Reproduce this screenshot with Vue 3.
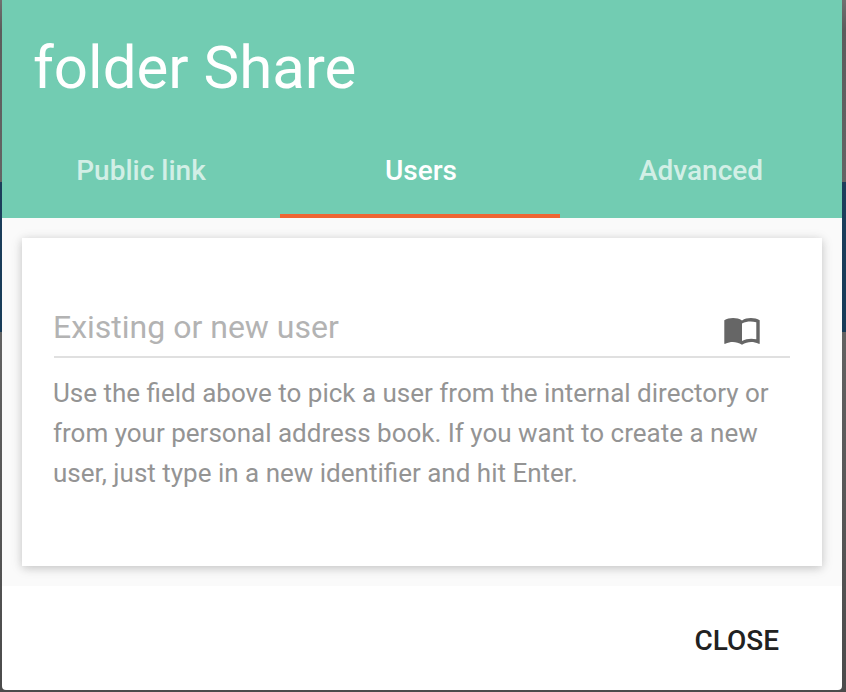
<script setup>
import { ref } from 'vue'

const tabs = ['Public link', 'Users', 'Advanced']
const active = ref('Users')
const user = ref('')
</script>

<template>
  <div class="backdrop">
    <section class="dialog">
      <header class="header">
        <h1 class="title">folder Share</h1>
        <nav class="tabs">
          <button
            v-for="tab in tabs"
            :key="tab"
            class="tab"
            :class="{ active: tab === active }"
            @click="active = tab"
          >{{ tab }}</button>
        </nav>
      </header>
      <main class="body">
        <div class="card">
          <div class="field">
            <input v-model="user" class="input" type="text" placeholder="Existing or new user" />
            <svg class="book" viewBox="0 0 36 27" width="36" height="27">
              <path
                fill="#666"
                fill-rule="evenodd"
                d="M0.300 2.200C5-.5 13-.8 18 2.400C23-.8 31-.5 35.700 2.200V25.200Q35.700 26.200 34.700 25.800C29 23.300 23.500 23.500 18 26.800C12.500 23.500 7 23.300 1.300 25.800Q.3 26.200 .3 25.200ZM18 5.400V23C22.500 20.600 27.500 20.100 32.300 21.300V4.300C27.500 3 22.500 3.300 18 5.400Z"
              />
            </svg>
          </div>
          <p class="help">
            Use the field above to pick a user from the internal directory or<br />
            from your personal address book. If you want to create a new<br />
            user, just type in a new identifier and hit Enter.
          </p>
        </div>
      </main>
      <footer class="footer">
        <button class="close">CLOSE</button>
      </footer>
    </section>
  </div>
</template>

<style>
body {
  margin: 0;
  overflow: hidden;
}
</style>

<style scoped>
.backdrop {
  box-sizing: border-box;
  height: 692px;
  padding: 0 4px 2px 2px;
  background: linear-gradient(#707070 0, #5c5c5c 30px, #646464 182px, #1c3e5b 182px, #173b58 332px, #626262 332px, #4b4b4b 692px);
  font-family: Roboto, "Liberation Sans", sans-serif;
}
.dialog {
  display: flex;
  flex-direction: column;
  height: 690px;
  overflow: hidden;
  border-radius: 0 0 4px 4px;
  background: #fff;
}
.header {
  display: flex;
  flex-direction: column;
  justify-content: space-between;
  height: 218px;
  background: #72ccb2;
}
.title {
  margin: 0;
  padding: 33px 31px 0;
  color: #fff;
  font-size: 60px;
  font-weight: 400;
  line-height: 70px;
}
.tabs {
  display: grid;
  grid-template-columns: repeat(3, 280px);
  height: 96px;
  margin-left: -2px;
}
.tab {
  box-sizing: border-box;
  padding: 4px 0 0 2px;
  border: 0;
  border-bottom: 4px solid transparent;
  background: none;
  color: rgba(255, 255, 255, 0.7);
  font: 500 28px Roboto, "Liberation Sans", sans-serif;
}
.tab.active {
  border-bottom-color: #ee6434;
  color: #fff;
}
.body {
  box-sizing: border-box;
  height: 368px;
  padding: 20px;
  background: #fafafa;
}
.card {
  box-sizing: border-box;
  height: 328px;
  padding: 60px 32px 0;
  background: #fff;
  box-shadow: 0 2px 12px rgba(0, 0, 0, 0.12), 0 2px 8px rgba(0, 0, 0, 0.12);
}
.field {
  box-sizing: border-box;
  display: flex;
  align-items: center;
  height: 60px;
  padding-right: 30px;
  border-bottom: 2px solid #e0e0e0;
}
.input {
  flex: 1;
  min-width: 0;
  margin-left: -1px;
  padding: 0;
  border: 0;
  outline: 0;
  background: none;
  color: #212121;
  font: 400 32px/40px Roboto, "Liberation Sans", sans-serif;
}
.input::placeholder {
  color: #b3b3b3;
  opacity: 1;
}
.book {
  margin-top: 8px;
}
.help {
  margin: 15px 0 0 -1px;
  color: #949494;
  font-size: 26px;
  line-height: 40px;
  white-space: nowrap;
}
.footer {
  display: flex;
  align-items: center;
  justify-content: flex-end;
  height: 104px;
  padding: 0 63px 0 0;
}
.close {
  padding: 4px 0 0;
  border: 0;
  background: none;
  color: #212121;
  font: 500 28px Roboto, "Liberation Sans", sans-serif;
}
</style>
